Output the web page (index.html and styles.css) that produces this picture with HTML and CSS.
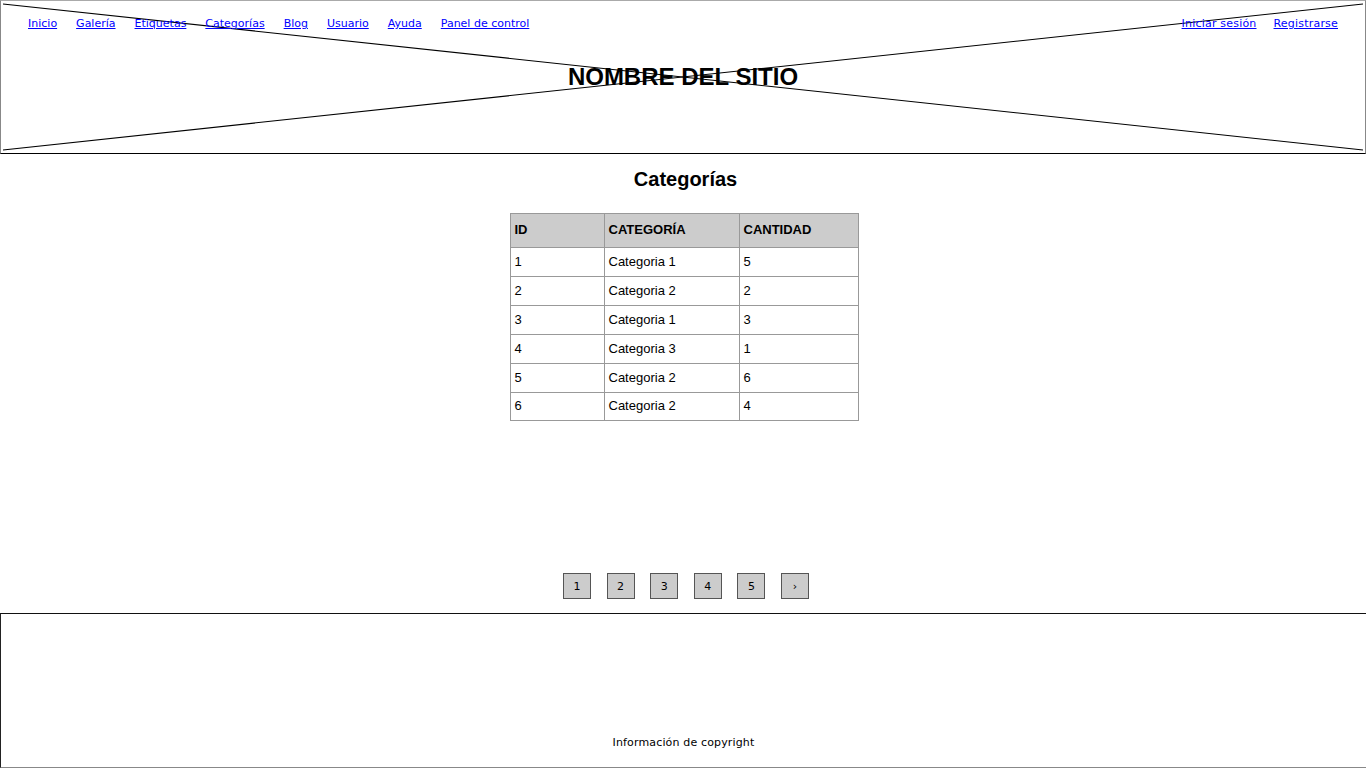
FILE: index.html
```html
<!DOCTYPE html>
<html lang="es">
<head>
<meta charset="utf-8">
<title>Categorías</title>
<link rel="stylesheet" href="styles.css">
</head>
<body>
<div class="page">
  <header class="site-header">
    <svg class="placeholder-x" viewBox="0 0 1366 154" preserveAspectRatio="none" aria-hidden="true">
      <line x1="2" y1="3" x2="1364" y2="151" />
      <line x1="2" y1="151" x2="1364" y2="3" />
    </svg>
    <nav class="nav">
      <div class="nav-left">
        <a href="#">Inicio</a>
        <a href="#">Galería</a>
        <a href="#">Etiquetas</a>
        <a href="#">Categorías</a>
        <a href="#">Blog</a>
        <a href="#">Usuario</a>
        <a href="#">Ayuda</a>
        <a href="#">Panel de control</a>
      </div>
      <div class="nav-right">
        <a href="#">Iniciar sesión</a>
        <a href="#">Registrarse</a>
      </div>
    </nav>
    <h1 class="site-name">NOMBRE DEL SITIO</h1>
  </header>

  <main class="main">
    <h2 class="page-title">Categorías</h2>
    <table class="data-table">
      <colgroup>
        <col class="col-id">
        <col class="col-cat">
        <col class="col-qty">
      </colgroup>
      <thead>
        <tr><th>ID</th><th>CATEGORÍA</th><th>CANTIDAD</th></tr>
      </thead>
      <tbody>
        <tr><td>1</td><td>Categoria 1</td><td>5</td></tr>
        <tr><td>2</td><td>Categoria 2</td><td>2</td></tr>
        <tr><td>3</td><td>Categoria 1</td><td>3</td></tr>
        <tr><td>4</td><td>Categoria 3</td><td>1</td></tr>
        <tr><td>5</td><td>Categoria 2</td><td>6</td></tr>
        <tr class="last"><td>6</td><td>Categoria 2</td><td>4</td></tr>
      </tbody>
    </table>

    <div class="pagination">
      <a href="#" class="page-btn">1</a>
      <a href="#" class="page-btn">2</a>
      <a href="#" class="page-btn">3</a>
      <a href="#" class="page-btn">4</a>
      <a href="#" class="page-btn">5</a>
      <a href="#" class="page-btn">›</a>
    </div>
  </main>

  <footer class="site-footer">
    <p class="copyright">Información de copyright</p>
  </footer>
</div>
</body>
</html>
```
FILE: styles.css
```css
* { box-sizing: border-box; }

html, body {
  margin: 0;
  padding: 0;
  background: #fff;
}

body {
  font-family: "Liberation Sans", Arial, sans-serif;
  color: #000;
}

.page {
  height: 768px;
  display: flex;
  flex-direction: column;
  overflow: hidden;
}

/* ---------- header ---------- */
.site-header {
  position: relative;
  height: 154px;
  flex: 0 0 154px;
  border-top: 1px solid #aaa;
  border-left: 1px solid #888;
  border-right: 1px solid #888;
  border-bottom: 1px solid #000;
}

.placeholder-x {
  position: absolute;
  inset: 0;
  width: 100%;
  height: 100%;
}

.placeholder-x line {
  stroke: #000;
  stroke-width: 1.1;
}

.nav {
  position: relative;
  display: flex;
  justify-content: space-between;
  padding: 16px 27px 0 27px;
}

.nav-left {
  display: flex;
  gap: 19px;
}

.nav-right {
  display: flex;
  gap: 17px;
}

.nav a {
  font-family: "Comic Sans MS", "DejaVu Sans", sans-serif;
  font-size: 11px;
  line-height: 14px;
  color: #0000ff;
  text-decoration: underline;
}

.nav-right a { letter-spacing: 0.2px; }

.site-name {
  position: relative;
  margin: 32px 0 0 0;
  text-align: center;
  font-family: "Liberation Sans", Arial, sans-serif;
  font-size: 24px;
  font-weight: bold;
  line-height: 28px;
}

/* ---------- main ---------- */
.main {
  flex: 1;
  display: flex;
  flex-direction: column;
  align-items: center;
}

.page-title {
  margin: 14px 0 22px 0;
  padding-left: 5px;
  font-size: 20px;
  line-height: 23px;
  font-weight: bold;
}

.data-table {
  border-collapse: collapse;
  table-layout: fixed;
  width: 348px;
  font-size: 13px;
  margin-left: 2px;
}

.col-id { width: 94px; }
.col-cat { width: 135px; }
.col-qty { width: 119px; }

.data-table th,
.data-table td {
  border: 1px solid #999;
  padding: 0 4px 2px 4px;
  text-align: left;
  vertical-align: middle;
}

.data-table th {
  background: #cccccc;
  font-weight: bold;
  height: 34px;
}

.data-table td {
  height: 29px;
}

.data-table tr.last td {
  height: 28px;
}

.pagination {
  margin-top: auto;
  margin-bottom: 14px;
  padding-left: 6px;
  display: flex;
  gap: 15.6px;
}

.page-btn {
  width: 28px;
  height: 26px;
  display: flex;
  align-items: center;
  justify-content: center;
  background: #cccccc;
  border: 1px solid #555;
  color: #000;
  text-decoration: none;
  font-family: "Comic Sans MS", "DejaVu Sans", sans-serif;
  font-size: 11px;
}

/* ---------- footer ---------- */
.site-footer {
  flex: 0 0 155px;
  height: 155px;
  border-top: 1px solid #111;
  border-left: 1px solid #222;
  border-bottom: 1px solid #888;
  display: flex;
  flex-direction: column;
  justify-content: flex-end;
  align-items: center;
}

.copyright {
  margin: 0 0 17px 0;
  font-family: "Comic Sans MS", "DejaVu Sans", sans-serif;
  font-size: 11px;
  line-height: 14px;
  letter-spacing: 0.15px;
}
```
